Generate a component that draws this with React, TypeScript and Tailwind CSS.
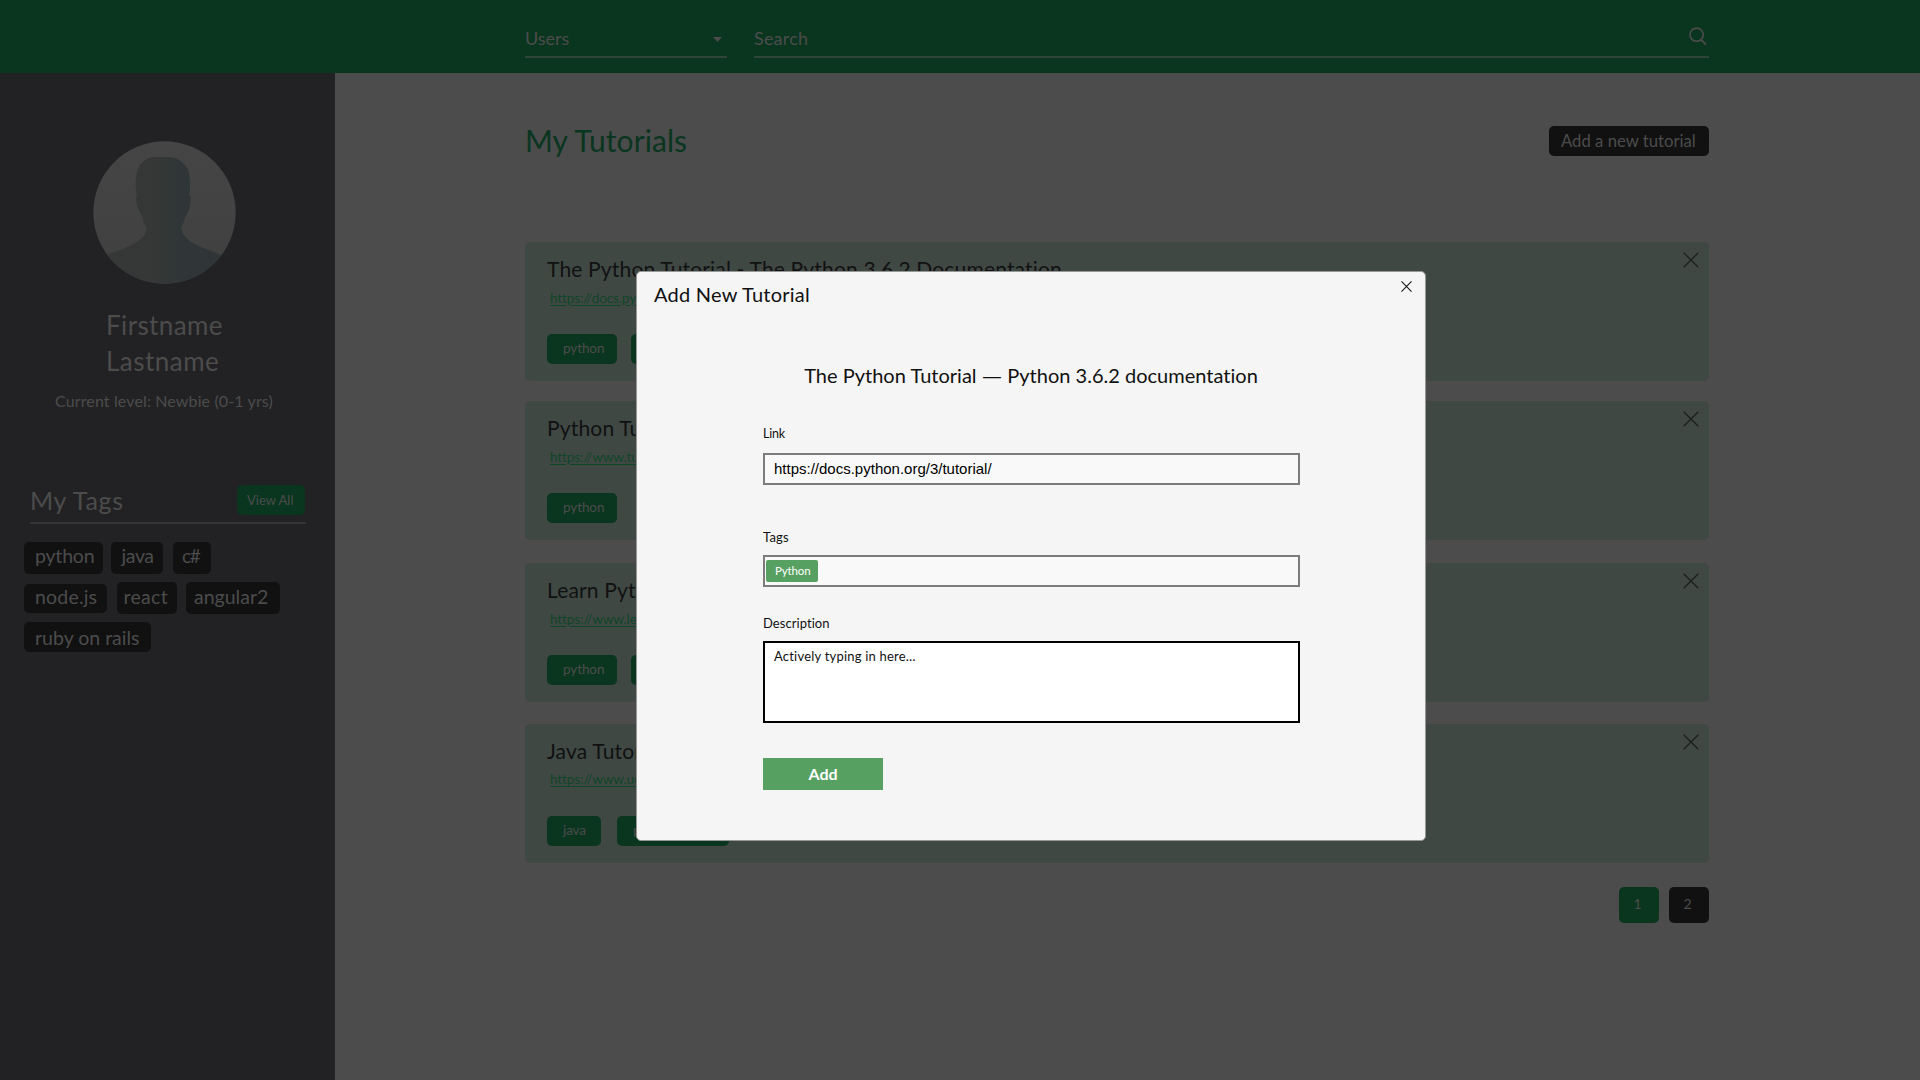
import React from "react";

const profileTags = [
  [
    { label: "python", box: "h-8 w-[79px] pl-[11px] leading-[28px] tracking-[-0.01em]" },
    { label: "java", box: "ml-2 h-8 w-[51.5px] pl-[10.5px] leading-[28px] tracking-[-0.02em]" },
    { label: "c#", box: "ml-[10.5px] h-8 w-[37.5px] pl-[9px] text-[19px] leading-[28px] tracking-[-0.07em]" },
  ],
  [
    { label: "node.js", box: "mt-0.5 h-[29px] w-[83px] pl-[11px] leading-[26px] tracking-[0.01em]" },
    { label: "react", box: "ml-2.5 h-8 w-[60px] pl-[6.5px] leading-[30px] tracking-[0.015em]" },
    { label: "angular2", box: "ml-[9px] h-8 w-[94px] pl-2 leading-[30px]" },
  ],
  [{ label: "ruby on rails", box: "h-[29.5px] w-[127px] pl-[11px] leading-[32px]" }],
];

const tutorials = [
  {
    title: "The Python Tutorial - The Python 3.6.2 Documentation",
    url: "https://docs.python.org/3/tutorial/",
    gap: "",
    tags: [{ label: "python", box: "w-[70px]" }, { label: "docs", box: "ml-3.5 w-[58px]" }],
  },
  {
    title: "Python Tutorial",
    url: "https://www.tutorialspoint.com/",
    gap: "mt-5",
    tags: [{ label: "python", box: "w-[70px]" }],
  },
  {
    title: "Learn Python",
    url: "https://www.learnpython.org/",
    gap: "mt-[23px]",
    tags: [{ label: "python", box: "w-[70px]" }, { label: "learn", box: "ml-3.5 w-[62px]" }],
  },
  {
    title: "Java Tutorial",
    url: "https://www.udemy.com/",
    gap: "mt-[21.5px]",
    tags: [{ label: "java", box: "w-[54px]" }, { label: "programming", box: "ml-4 w-[112px]" }],
  },
];

function Cross({ className }: { className: string }) {
  return (
    <svg viewBox="0 0 16 16" className={className} fill="none" stroke="currentColor">
      <path d="M.7.7l14.6 14.6M15.3.7L.7 15.3" />
    </svg>
  );
}

function Avatar() {
  return (
    <svg viewBox="0 0 429 429" className="mt-[68px] ml-[93px] size-[143px] shrink-0">
      <defs>
        <linearGradient id="disc" x1="0" y1="0" x2="0" y2="1">
          <stop offset="0" stopColor="#444544" />
          <stop offset="1" stopColor="#3f403f" />
        </linearGradient>
        <linearGradient id="person" x1="0" y1="0" x2="1" y2="0">
          <stop offset="0.1" stopColor="#363837" />
          <stop offset="0.45" stopColor="#343735" />
          <stop offset="0.6" stopColor="#303637" />
          <stop offset="1" stopColor="#2f3536" />
        </linearGradient>
        <clipPath id="round">
          <circle cx="214.5" cy="214.5" r="213.5" />
        </clipPath>
      </defs>
      <g clipPath="url(#round)">
        <rect width="429" height="429" fill="url(#disc)" />
        <path
          fill="url(#person)"
          d="M0 355L42 341C80 327 113 317 136 300C143 294 148 291 152 286C155 279 158 277 160 266C160 255 155 252 152 244C151 233 148 228 144 221C136 206 129 190 129 172C129 167 130 166 132 165C127 145 127 122 129 108C132 85 139 72 148 63C160 53 172 49 187 48H224C237 48 247 50 257 56C269 64 284 77 287 92C292 112 292 145 289 166C293 166 294 167 294 172C293 192 289 210 277 228C273 238 273 246 266 254C263 260 266 268 269 276C272 283 275 287 279 289C288 300 299 308 312 313L387 343L429 358V429H0Z"
        />
      </g>
    </svg>
  );
}

function Sidebar() {
  return (
    <aside className="flex w-[335px] shrink-0 flex-col bg-[#222224] text-[#4c4c4c]">
      <Avatar />
      <h2 className="mt-[23px] ml-[106px] text-[26px] leading-[36px]">
        <span className="block tracking-[0.38px]">Firstname</span>
        <span className="block tracking-[0.48px]">Lastname</span>
      </h2>
      <p className="mt-3 ml-[55px] text-[16px] leading-5 tracking-[0.13px]">Current level: Newbie (0-1 yrs)</p>
      <div className="mt-[74px] ml-[30px] flex w-[276px] justify-between border-b-2 border-[#353538] pr-px pb-[7px]">
        <h3 className="text-[25px] leading-[30px] tracking-[0.66px]">My Tags</h3>
        <button className="h-[30px] w-[68px] rounded-[5px] bg-[#0a351f] pl-2.5 text-left text-[13px] leading-[30px]">
          View All
        </button>
      </div>
      <div className="mt-[18px] ml-6 flex flex-col text-[19.5px]">
        {profileTags.map((row, i) => (
          <div key={i} className="flex h-10 items-start">
            {row.map((tag) => (
              <span key={tag.label} className={`rounded-[5px] bg-[#111112] whitespace-nowrap ${tag.box}`}>
                {tag.label}
              </span>
            ))}
          </div>
        ))}
      </div>
    </aside>
  );
}

function Header() {
  return (
    <header className="flex h-[73px] shrink-0 items-start gap-[27px] bg-[#0a351f] pl-[525px] text-[18px] leading-6 text-[#4c4c4c]">
      <div className="flex h-[58px] w-[202px] justify-between border-b-2 border-[#2f4538] pt-[26px]">
        <span>Users</span>
        <svg viewBox="0 0 9 5" className="mt-[11px] mr-[5px] h-[5px] w-[9px]" fill="currentColor">
          <path d="M0 0H9L4.5 5Z" />
        </svg>
      </div>
      <div className="flex h-[58px] w-[955px] justify-between border-b-2 border-[#2f4538] pt-[26px]">
        <span className="tracking-[0.2px]">Search</span>
        <svg viewBox="0 0 18 18" className="mt-[0.5px] mr-0.5 size-[18px]" fill="none" stroke="currentColor" strokeWidth="1.6">
          <circle cx="7.6" cy="7.7" r="6.6" />
          <path d="M12 12.6l5 5" strokeWidth="2" />
        </svg>
      </div>
    </header>
  );
}

function TutorialCard({ title, url, gap, tags }: (typeof tutorials)[number]) {
  return (
    <article className={`flex h-[139px] justify-between rounded-[5px] bg-[#404843] ${gap}`}>
      <div className="pt-[14px] pl-[22px]">
        <h3 className="text-[21px] leading-[26px] tracking-[0.17px] text-[#111112]">{title}</h3>
        <a className="mt-[6.5px] ml-[3px] block text-[13.5px] leading-[18px] tracking-[-0.1px] text-[#0f4529] underline underline-offset-2">
          {url}
        </a>
        <div className="mt-[27.5px] flex text-[13.5px] leading-[28px] text-[#4c4c4c]">
          {tags.map((tag) => (
            <span key={tag.label} className={`h-[30px] rounded-[5px] bg-[#0a351f] pl-4 tracking-[-0.1px] ${tag.box}`}>
              {tag.label}
            </span>
          ))}
        </div>
      </div>
      <Cross className="mt-2.5 mr-2.5 size-4 stroke-[1.3] text-[#1c1e1d]" />
    </article>
  );
}

function Main() {
  return (
    <main className="w-[1374px] bg-[#4c4c4c] pt-12 pl-[190px]">
      <div className="flex justify-between">
        <h1 className="pt-px text-[30px] leading-[36px] tracking-[0.09px] text-[#0a351f]">My Tutorials</h1>
        <button className="mt-[5px] h-[30px] w-40 rounded-[5px] bg-[#111112] pl-3 text-left text-[16.7px] leading-[28px] text-[#4c4c4c]">
          Add a new tutorial
        </button>
      </div>
      <div className="mt-[84px]">
        {tutorials.map((t) => (
          <TutorialCard key={t.title} {...t} />
        ))}
      </div>
      <nav className="mt-[24.5px] flex justify-end gap-2.5 text-[14px] leading-[34px] text-[#4c4c4c]">
        <span className="h-9 w-10 rounded-[5px] bg-[#0a351f] pl-[14.5px]">1</span>
        <span className="h-9 w-10 rounded-[5px] bg-[#111112] pl-[14.5px]">2</span>
      </nav>
    </main>
  );
}

function AddTutorialModal() {
  return (
    <div className="absolute top-[271px] left-[636px] flex h-[570px] w-[790px] flex-col rounded-[5px] border border-[#979797] bg-[#f5f5f5] text-[13px] leading-4 text-[#111]">
      <div className="flex justify-between pt-[9px] pr-[13px] pl-[17px]">
        <h2 className="text-[20px] leading-[26px] tracking-[0.24px]">Add New Tutorial</h2>
        <Cross className="size-[11px] stroke-[1.5]" />
      </div>
      <h3 className="mt-[54.5px] text-center text-[20px] leading-[26px] tracking-[0.01px] whitespace-nowrap">
        The Python Tutorial <span className="mr-[2.5px] ml-[2px] inline-block scale-x-135">—</span> Python 3.6.2 documentation
      </h3>
      <form className="mt-[37px] ml-[126px] flex w-[537px] flex-col items-stretch">
        <label className="pt-px text-[12.5px] tracking-[-0.2px]">Link</label>
        <div className="mt-[11.5px] h-8 border-2 border-[#7c7c7c] bg-[#f9f9f9] pl-[9px] font-['Liberation_Sans',sans-serif] text-[15px] leading-[27px] text-black">
          https://docs.python.org/3/tutorial/
        </div>
        <label className="mt-[42.5px] pt-px tracking-[0.2px]">Tags</label>
        <div className="mt-[10.5px] h-8 border-2 border-[#7c7c7c] bg-[#f9f9f9] pt-[3px] pl-px">
          <span className="block h-[22px] w-[52px] rounded-xs bg-[#56a161] pl-[9px] text-[11.5px] leading-[22px] tracking-[-0.15px] text-white">
            Python
          </span>
        </div>
        <label className="mt-[26.5px] pt-px tracking-[0.06px]">Description</label>
        <div className="mt-[10.5px] h-[82px] border-2 border-black bg-white pt-[4.5px] pl-[9px] tracking-[0.21px]">
          Actively typing in here…
        </div>
        <button type="button" className="mt-[35px] h-8 w-[120px] bg-[#56a161] text-[16px] leading-8 font-bold text-white">
          Add
        </button>
      </form>
    </div>
  );
}

export default function App() {
  return (
    <div className="relative flex h-[1080px] w-[1920px] flex-col overflow-hidden bg-[#4c4c4c] font-['Lato',sans-serif] [font-variant-ligatures:none]">
      <Header />
      <div className="flex flex-1">
        <Sidebar />
        <Main />
      </div>
      <AddTutorialModal />
    </div>
  );
}
